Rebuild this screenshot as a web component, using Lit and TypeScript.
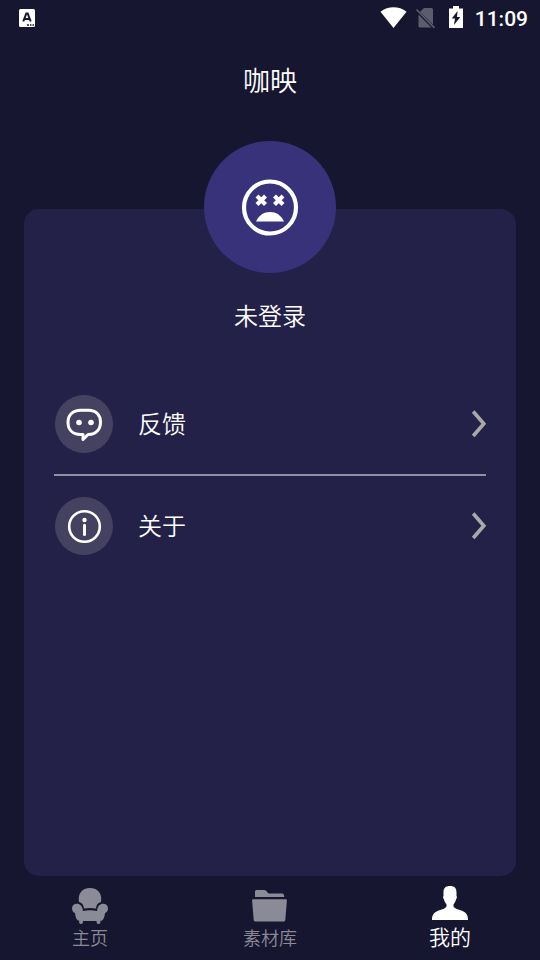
import { LitElement, html, svg, css } from "lit";
import { customElement, property, state } from "lit/decorators.js";
import { classMap } from "lit/directives/class-map.js";

const feedbackIcon = html`<svg width="58" height="58" viewBox="0 0 58 58" fill="none" aria-hidden="true">
  <path d="M25.500 15.300H33.500C41 15.300 45.500 20 45.500 27C45.500 34.500 41 39.500 33.500 39.500H33L28 44.500V39.500H25.500C17.500 39.500 13 34.500 13 27C13 20 18 15.300 25.500 15.300Z" stroke="#fff" stroke-width="3" stroke-linejoin="round"/>
  <circle cx="24" cy="27.500" r="2.800" fill="#fff"/><circle cx="36" cy="27.500" r="2.800" fill="#fff"/>
</svg>`;

const aboutIcon = html`<svg width="58" height="58" viewBox="0 0 58 58" fill="none" aria-hidden="true">
  <circle cx="29.500" cy="29.500" r="15.300" stroke="#fff" stroke-width="2.600"/>
  <circle cx="29.500" cy="23" r="2.200" fill="#fff"/>
  <path d="M29.500 28.300V37.500" stroke="#fff" stroke-width="3" stroke-linecap="round"/>
</svg>`;

@customElement("status-bar")
export class StatusBar extends LitElement {
  static styles = css`
    :host {
      display: flex;
      align-items: center;
      height: 36px;
      padding: 0 12px 0 18px;
      font: 500 21px/36px Roboto, sans-serif;
      color: #fff;
    }
    .signals { display: flex; align-items: center; margin-left: auto; }
    .time { margin-left: 10px; line-height: 34px; padding-top: 2px; }
    svg { display: block; }
  `;
  render() {
    return html`
      <svg width="18" height="20" viewBox="0 0 18 20" aria-hidden="true">
        <rect x="1" y="1" width="16" height="18" rx="1.500" fill="#fff"/>
        <path d="M5.300 13.500L8.300 5.500H9.700L12.700 13.500M6.300 11H11.700" fill="none" stroke="#171630" stroke-width="2"/>
        <path d="M9 17H11M12 17H13.500M14.500 17H16" stroke="#171630" stroke-width="1.500"/>
      </svg>
      <div class="signals">
        <svg width="85" height="24" viewBox="0 0 85 24" aria-hidden="true">
          <path d="M0.500 5.700C8 -0.200 19 -0.200 26.500 5.700L13.500 22Z" fill="#fff"/>
          <path d="M44 2H51.500Q53 2 53 3.500V18.500L40 5.800ZM38.500 8.500L51.500 21.500H40Q38.500 21.500 38.500 20Z" fill="#5d5c6e"/>
          <path d="M36.500 3.500L54.500 21.800" stroke="#5d5c6e" stroke-width="1.700"/>
          <path d="M73 0H79V2.500H83V22H69V2.500H73Z" fill="#fff"/>
          <path d="M77.500 5L71.800 12.500H75L74 19L80.300 11H77Z" fill="#171630"/>
        </svg>
        <span class="time">11:09</span>
      </div>
    `;
  }
}

@customElement("menu-row")
export class MenuRow extends LitElement {
  @property() label = "";
  @property({ attribute: false }) icon: unknown;
  static styles = css`
    :host { display: block; }
    .row {
      display: flex;
      align-items: center;
      width: 100%;
      height: 100px;
      padding: 0 0 0 1px;
      border: 0;
      background: none;
      color: inherit;
      font: inherit;
      text-align: left;
      cursor: pointer;
    }
    .badge { width: 58px; height: 58px; margin-right: 25px; border-radius: 50%; background: #454261; }
    .label { flex: 1; padding-bottom: 2px; }
    svg { display: block; }
  `;
  render() {
    return html`<button class="row" type="button">
      <span class="badge">${this.icon}</span>
      <span class="label">${this.label}</span>
      <svg width="15" height="28" viewBox="0 0 15 28" fill="none" aria-hidden="true">
        <path d="M2.200 1.500L12.800 13.700L2.200 26" stroke="#a9a9a9" stroke-width="3.600"/>
      </svg>
    </button>`;
  }
}

const tabs = [
  {
    id: "home",
    label: "主页",
    shape: svg`
      <path d="M7 14C5.500 6 10 0 18 0S30.500 6 29 14C25.500 15 24.500 17 24 20.500Q18 19.500 12 20.500C11.500 17 10.500 15 7 14Z"/>
      <path d="M0 20.500C0 17.800 2 15.800 4.800 15.800C8 15.800 10.500 18 11 23Q18 21.500 25 23C25.500 18 28 15.800 31.200 15.800C34 15.800 36 17.800 36 20.500C36 23 34.500 24.500 33 25C32.500 30 31 33 28 33H8C5 33 3.500 30 3 25C1.500 24.500 0 23 0 20.500Z"/>
      <circle cx="9" cy="34" r="2"/><circle cx="26.500" cy="34" r="2"/>`,
  },
  {
    id: "library",
    label: "素材库",
    shape: svg`
      <path d="M3 9V3.500Q3 2 4.500 2H12Q13.500 2 14.500 3.300L16.500 5.500H30.500Q32 5.500 32.300 9Z"/>
      <path d="M1 11.200H34Q35 11.200 34.900 12.500L33.300 32Q33.100 33.600 31.500 33.600H3.500Q1.900 33.600 1.700 32L0.100 12.500Q0 11.200 1 11.200Z"/>`,
  },
  {
    id: "mine",
    label: "我的",
    shape: svg`
      <path d="M18 0C22.500 0 24.500 2 24.500 6.500V10C25.200 10.500 25 12.500 24 13.500C23.500 16 22 17.500 21.500 18.500V20.500C22.500 23 28 23.500 31.500 25.500C35 27.500 36 30 36 34H0C0 30 1 27.500 4.500 25.500C8 23.500 13.500 23 14.500 20.500V18.500C14 17.500 12.500 16 12 13.500C11 12.500 10.800 10.500 11.500 10V6.500C11.500 2 13.500 0 18 0Z"/>`,
  },
];

@customElement("app-root")
export class AppRoot extends LitElement {
  @state() private current = "mine";

  static styles = css`
    :host {
      display: flex;
      flex-direction: column;
      min-height: 100vh;
      background: #171630;
      color: #fff;
      font: 350 24px/32px "Noto Sans CJK SC", sans-serif;
    }
    .title {
      margin: 0;
      font-size: 27px;
      font-weight: 350;
      line-height: 88px;
      text-align: center;
    }
    .card {
      flex: 1;
      margin: 85px 24px 0;
      padding: 0 30px;
      border-radius: 15px;
      background: #242148;
    }
    .avatar {
      display: block;
      width: 132px;
      height: 132px;
      margin: -68px auto 0;
      border-radius: 50%;
      background: #37327a;
    }
    .name { margin: 26px 0 43px; text-align: center; }
    .divider { height: 2px; margin: 0; border: 0; background: #918fa3; }
    .tabs { display: grid; grid-template-columns: repeat(3, 1fr); height: 84px; }
    .tab {
      display: flex;
      flex-direction: column;
      align-items: center;
      padding: 12px 0 0;
      border: 0;
      background: none;
      color: #8b8a97;
      font: inherit;
      font-size: 18px;
      line-height: 26px;
      cursor: pointer;
    }
    .active { padding-top: 10px; color: #fff; font-size: 21px; line-height: 28px; }
    .tab svg { display: block; fill: currentColor; }
  `;

  render() {
    return html`
      <status-bar></status-bar>
      <h1 class="title">咖映</h1>
      <main class="card">
        <svg class="avatar" viewBox="0 0 132 132" fill="none" aria-hidden="true">
          <circle cx="66" cy="66.500" r="26" stroke="#fff" stroke-width="4.200"/>
          <path d="M53 55L61.500 63.500M61.500 55L53 63.500M70.500 55L79 63.500M79 55L70.500 63.500" stroke="#fff" stroke-width="4.200"/>
          <path d="M52 80.500C55 74 60 71 66 71S77 74 80 80.500Z" fill="#fff"/>
        </svg>
        <p class="name">未登录</p>
        <menu-row label="反馈" .icon=${feedbackIcon}></menu-row>
        <hr class="divider" />
        <menu-row label="关于" .icon=${aboutIcon}></menu-row>
      </main>
      <nav class="tabs">
        ${tabs.map(
          (t) => html`<button
            type="button"
            class=${classMap({ tab: true, active: t.id === this.current })}
            @click=${() => (this.current = t.id)}
          >
            <svg width="36" height="36" viewBox="0 0 36 36" aria-hidden="true">${t.shape}</svg>
            <span>${t.label}</span>
          </button>`
        )}
      </nav>
    `;
  }
}
